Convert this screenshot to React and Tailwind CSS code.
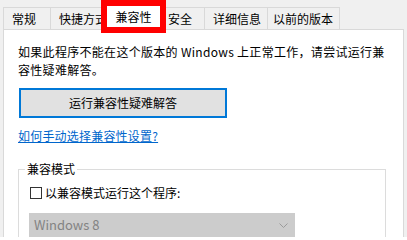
export default function App() {
  return (
    <div className="h-[237px] w-[407px] overflow-hidden bg-[#f0f0f0] font-['Noto_Sans_CJK_SC',sans-serif] text-[12px] text-black">
      {/* tab strip */}
      <div className="flex h-[29px] items-end pl-[3px]">
        <div className="h-[22px] w-[47px] border-l border-t border-[#d9d9d9] pl-2 leading-[21px]">常规</div>
        <div className="h-[22px] w-[64px] overflow-hidden whitespace-nowrap border-l border-t border-[#d9d9d9] pl-2 leading-[21px]">
          快捷方式
        </div>
        <div className="relative z-10 -ml-[13px] h-[33px] w-[65px] self-start border-[6px] border-[#ff0000] bg-white text-center leading-[21px]">
          兼容性
        </div>
        <div className="-ml-[8px] h-[22px] w-[46px] border-l border-t border-[#d9d9d9] pl-[9px] leading-[21px]">安全</div>
        <div className="h-[22px] w-[63px] border-l border-t border-[#d9d9d9] pl-2 leading-[21px]">详细信息</div>
        <div className="h-[22px] w-[73px] border-x border-t border-[#d9d9d9] pl-[5px] leading-[21px]">以前的版本</div>
      </div>

      {/* panel */}
      <div className="mx-[3px] h-[240px] border border-[#d9d9d9] bg-white px-[14px] pt-[13px]">
        <p className="leading-[18px] tracking-[0.3px]">
          如果此程序不能在这个版本的 Windows 上正常工作，请尝试运行兼
          <br />
          容性疑难解答。
        </p>

        <button className="ml-px mt-[9px] flex h-[30px] w-[208px] items-center justify-center border-2 border-[#0078d7] bg-[#e1e1e1]">
          运行兼容性疑难解答
        </button>

        <a className="mt-[9px] block leading-[18px] tracking-[0.2px] text-[#0066cc] underline">如何手动选择兼容性设置?</a>

        <fieldset className="mt-[15px] w-[368px] border border-[#dcdcdc]">
          <legend className="ml-[6px] px-[2px] leading-[18px]">兼容模式</legend>
          <div className="mt-[6px] flex h-[18px] items-center pl-[11px]">
            <span className="h-[12px] w-[12px] border border-[#333333] bg-white" />
            <span className="ml-[3px] leading-[18px]">以兼容模式运行这个程序:</span>
          </div>
          <div className="ml-[10px] mt-[11px] flex h-[24px] w-[266px] items-center justify-between border border-[#cccccc] bg-[#cccccc] pl-[4px] pr-[6px] text-[13px] text-[#838383]">
            <span>Windows 8</span>
            <svg width="9" height="5" viewBox="0 0 9 5" fill="none" stroke="#9a9a9a" strokeWidth="1">
              <path d="M0.5 0.5 L4.5 4.5 L8.5 0.5" />
            </svg>
          </div>
        </fieldset>
      </div>
    </div>
  )
}
